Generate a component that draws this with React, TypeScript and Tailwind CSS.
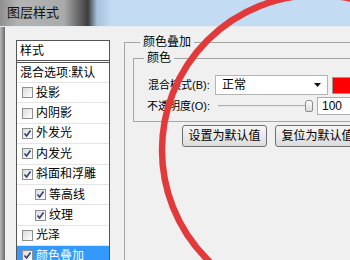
import React from "react";

// ─── Data ─────────────────────────────────────────────────────────────────────

const ROWS = [
  { label: "投影", checked: false },
  { label: "内阴影", checked: false },
  { label: "外发光", checked: true },
  { label: "内发光", checked: true },
  { label: "斜面和浮雕", checked: true },
  { label: "等高线", checked: true, indent: true },
  { label: "纹理", checked: true, indent: true },
  { label: "光泽", checked: false },
  { label: "颜色叠加", checked: true, selected: true },
] as const;

// ─── Checkbox ─────────────────────────────────────────────────────────────────

function Check({ checked }: { checked: boolean }) {
  return (
    <span className="flex h-[11px] w-[11px] shrink-0 items-center justify-center border border-[#8f8f8f] bg-[linear-gradient(135deg,#dcdcdc,#ffffff)]">
      {checked && (
        <svg width="9" height="9" viewBox="0 0 9 9">
          <path d="M1.5 4.5 L3.6 7 L7.5 1.5" fill="none" stroke="#2b3f72" strokeWidth="1.6" />
        </svg>
      )}
    </span>
  );
}

// ─── Style list ───────────────────────────────────────────────────────────────

function StyleList() {
  return (
    <div className="w-[94px] border border-[#555555] bg-white">
      <div className="flex h-[22px] items-center border-b-[3px] border-double border-[#555555] pl-[3px]">样式</div>
      <div className="flex h-[20px] items-center whitespace-nowrap border-b border-[#e4e4e4] pl-[3px]">混合选项:默认</div>
      {ROWS.map((r) => (
        <div
          key={r.label}
          className={
            "flex h-[20.4px] items-center gap-[3px] border-b border-[#e4e4e4] " +
            ("indent" in r && r.indent ? "pl-[18px] " : "pl-[5px] ") +
            ("selected" in r && r.selected ? "bg-[#3399ff] text-white" : "")
          }
        >
          <Check checked={r.checked} />
          <span>{r.label}</span>
        </div>
      ))}
    </div>
  );
}

// ─── Color overlay panel ──────────────────────────────────────────────────────

function OverlayPanel() {
  return (
    <fieldset className="h-[240px] w-[260px] border border-[#a6a6a6]">
      <legend className="ml-[15px] px-[3px] leading-[14px]">颜色叠加</legend>

      <fieldset className="ml-[8px] mt-[2px] w-[240px] border border-[#a6a6a6] pb-[6px] pl-[14px]">
        <legend className="-ml-[4px] px-[3px] leading-[14px]">颜色</legend>

        <div className="mt-[10px] flex h-[20px] items-center">
          <span className="w-[67px] shrink-0 whitespace-nowrap text-[11px]">混合模式(B):</span>
          <div className="flex h-[20px] w-[113px] shrink-0 items-center justify-between border border-[#b4b4b4] bg-white pl-[6px] pr-[6px]">
            <span>正常</span>
            <svg width="7" height="4" viewBox="0 0 7 4">
              <path d="M0 0 H7 L3.5 4 Z" fill="#111" />
            </svg>
          </div>
          <div className="ml-[4px] h-[17px] w-[30px] shrink-0 border border-[#9a9a9a] bg-[#ff0000]" />
        </div>

        <div className="mt-[2px] flex h-[18px] items-center">
          <span className="-ml-[1px] w-[68px] shrink-0 whitespace-nowrap text-[11px]">不透明度(O):</span>
          <div className="relative ml-[3px] h-[18px] w-[96px] shrink-0">
            <div className="absolute left-0 right-[2px] top-[8px] h-[2px] border-t border-[#b0b0b0] bg-[#e8e8e8]" />
            <div className="absolute left-[87px] top-[3px] h-[12px] w-[8px] rounded-t-[3px] rounded-b-[2px] border border-[#8c8c8c] bg-[linear-gradient(#ffffff,#dadada)]" />
          </div>
          <div className="ml-[3px] flex h-[18px] w-[40px] shrink-0 items-center border border-[#abadb3] bg-white pl-[4px]">100</div>
        </div>
      </fieldset>

      <div className="ml-[57px] mt-[3px] flex gap-[8px]">
        <button className="h-[22px] w-[85px] shrink-0 rounded-[3px] border border-[#707070] bg-[linear-gradient(#f6f6f6,#dcdcdc)]">
          设置为默认值
        </button>
        <button className="h-[22px] w-[85px] shrink-0 rounded-[3px] border border-[#707070] bg-[linear-gradient(#f6f6f6,#dcdcdc)]">
          复位为默认值
        </button>
      </div>
    </fieldset>
  );
}

// ─── Export ───────────────────────────────────────────────────────────────────

export default function App() {
  return (
    <div className="relative h-[260px] w-[350px] overflow-hidden bg-[#f0f0f0] font-['Liberation_Sans','Noto_Sans_CJK_SC',sans-serif] text-[12px] text-black">
      {/* Title bar */}
      <div className="flex h-[27px] items-center border-b border-[#e6ebf0] bg-[linear-gradient(90deg,#8f8f8f_0px,#b4b4b4_18px,#aaaaaa_64px,#3c3c3c_88px,#a9c2dc_97px,#c3dbf3_112px,#c3dbf3_100%)] pl-[7px]">
        <span className="text-[13px] text-[#111]">图层样式</span>
      </div>

      <div className="flex h-[233px]">
        <div className="w-[5px] shrink-0 bg-[linear-gradient(90deg,#b8b8b8,#6c6c6c)]" />
        <div className="shrink-0 pl-[11px] pt-[13px]">
          <StyleList />
        </div>
        <div className="ml-[14px] shrink-0 pt-[8px]">
          <OverlayPanel />
        </div>
      </div>

      {/* Hand-drawn red circle */}
      <svg className="pointer-events-none absolute inset-0" width="350" height="260">
        <circle cx="317" cy="150" r="155" fill="none" stroke="#e23a3a" strokeWidth="6.5" />
      </svg>
    </div>
  );
}
